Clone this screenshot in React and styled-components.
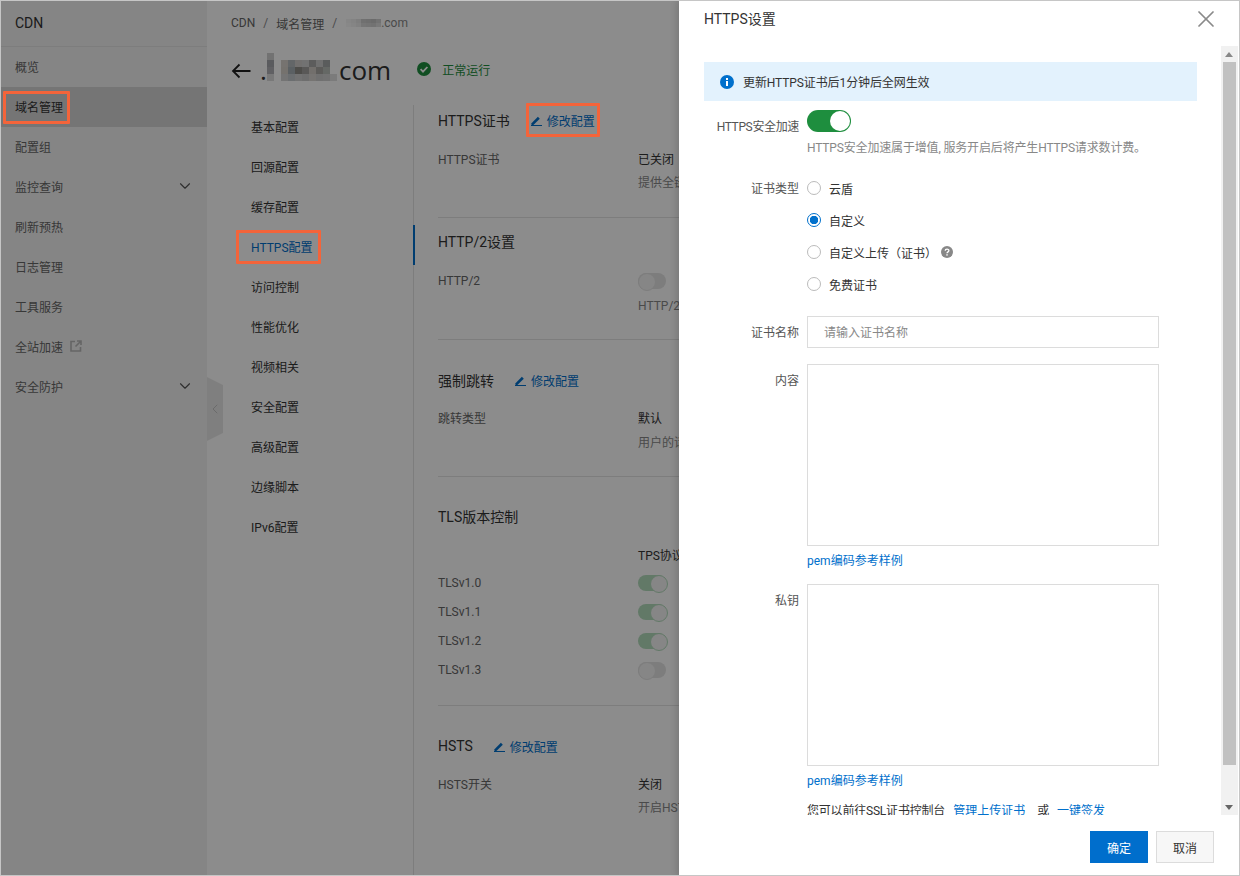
import styled, { createGlobalStyle } from "styled-components";
import { ChevronDown, ChevronLeft, X } from "lucide-react";

const BLUE = "#0070cc";
const FONT = `Roboto, "Noto Sans CJK SC", sans-serif`;

const SIDE_ITEMS = [
  { label: "概览" },
  { label: "域名管理", active: true },
  { label: "配置组" },
  { label: "监控查询", arrow: true },
  { label: "刷新预热" },
  { label: "日志管理" },
  { label: "工具服务" },
  { label: "全站加速", external: true },
  { label: "安全防护", arrow: true },
];

const SUB_ITEMS = ["基本配置", "回源配置", "缓存配置", "HTTPS配置", "访问控制", "性能优化", "视频相关", "安全配置", "高级配置", "边缘脚本", "IPv6配置"];

const TLS = [
  { name: "TLSv1.0", on: true },
  { name: "TLSv1.1", on: true },
  { name: "TLSv1.2", on: true },
  { name: "TLSv1.3", on: false },
];

// blurred domain, one array per row of the mosaic
const TITLE_BLUR = [
  ["#cfcfcf", "", "", "", "", "", "", "", "", ""],
  ["#a4a6ab", "", "#d8d2cc", "#b5babd", "#d0cdca", "#cfcfcf", "#a8a8a8", "#cdcdcd", "#a5a8a8", ""],
  ["#b0b0b5", "", "#d6d0c8", "#a6afb5", "#8f8c88", "#a3a19e", "#d0cbc5", "#a8a6a2", "#b9bdb9", ""],
  ["#dcdcdc", "", "#d4d4d4", "#c4c8cc", "#d0d0d0", "#c8c8c8", "#d8d4d0", "#cccccc", "#d0d0d0", "#e0e0e0"],
];
const CRUMB_BLUR = [
  ["#f4f4f4", "#eeeeee", "#e6e6e6", "#cccccc", "#c8c8c8", "#c4c4c4", "#d0d0d0"],
  ["#f8f8f8", "#f2f2f2", "#ececec", "#d8d8d8", "#d4d4d4", "#d0d0d0", "#dcdcdc"],
];

const GlobalStyle = createGlobalStyle`
  html, body { margin: 0; padding: 0; background: #fff; }
  * { box-sizing: border-box; }
  body { font-family: ${FONT}; font-size: 12px; color: #333; }
`;

const Frame = styled.div`
  position: relative;
  width: 1240px;
  height: 876px;
  overflow: hidden;
  display: flex;
  background: #fff;
  &::after {
    content: "";
    position: absolute;
    inset: 0;
    border: 1px solid #c6c6c6;
    z-index: 9;
    pointer-events: none;
  }
`;

const Sidebar = styled.aside`
  flex: 0 0 207px;
  background: #f2f2f2;
`;

const SideHead = styled.div`
  height: 47px;
  padding-left: 15px;
  display: flex;
  align-items: center;
  font-size: 14px;
  color: #333;
  border-bottom: 1px solid #e3e3e3;
`;

const SideItem = styled.div`
  height: 40px;
  padding: 0 15px 2px;
  display: flex;
  align-items: center;
  color: ${(p) => (p.$active ? "#333" : "#666")};
  background: ${(p) => (p.$active ? "#d6d6d6" : "transparent")};
`;

const SideArrow = styled(ChevronDown)`
  margin-left: auto;
  margin-right: -2px;
  color: #555;
`;

const ExternalIcon = styled.svg`
  margin-left: 7px;
  width: 12px;
  height: 12px;
`;

const Collapse = styled.div`
  position: absolute;
  left: 207px;
  top: 377px;
  width: 16px;
  height: 64px;
  background: #e8e8e8;
  clip-path: polygon(0 0, 100% 8px, 100% 56px, 0 100%);
  display: flex;
  align-items: center;
  justify-content: center;
  color: #c4c4c4;
`;

const Main = styled.main`
  flex: 1;
  min-width: 0;
  padding-left: 24px;
  display: flex;
  flex-direction: column;
`;

const Crumbs = styled.div`
  height: 46px;
  display: flex;
  align-items: center;
  gap: 8px;
  color: #666;
`;

const CrumbSep = styled.span`
  color: #888;
`;

const Mosaic = styled.span`
  display: inline-flex;
  flex-direction: column;
  flex: none;
`;

const MosaicRow = styled.span`
  display: flex;
`;

const MosaicCell = styled.span`
  width: ${(p) => p.$w}px;
  height: ${(p) => p.$h}px;
  background: ${(p) => p.$c || "transparent"};
`;

const CrumbDomain = styled.span`
  display: flex;
  align-items: center;
  margin-left: 1px;
  font-size: 12px;
  color: #888;
`;

const TitleRow = styled.div`
  height: 59px;
  display: flex;
  align-items: center;
  padding-bottom: 9px;
`;

const TitleDomain = styled.span`
  display: flex;
  align-items: center;
  gap: 2px;
  margin-left: 9px;
  margin-bottom: 2px;
  font: 26px/36px "Open Sans", sans-serif;
  color: #333;
`;

const TitleDot = styled.span`
  width: 5px;
`;

const TitleBlur = styled.span`
  display: flex;
  margin-bottom: 7px;
`;

const Status = styled.span`
  display: flex;
  align-items: center;
  gap: 11px;
  margin-left: 26px;
  margin-bottom: 4px;
  color: #1e8e3e;
`;

const Body = styled.div`
  flex: 1;
  min-height: 0;
  display: flex;
`;

const SubNav = styled.nav`
  flex: 0 0 183px;
  padding-top: 2px;
  border-right: 1px solid #e3e3e3;
`;

const SubItem = styled.div`
  position: relative;
  height: 40px;
  padding: 0 0 2px 20px;
  display: flex;
  align-items: center;
  color: ${(p) => (p.$active ? BLUE : "#333")};
  ${(p) =>
    p.$active &&
    `&::after {
      content: "";
      position: absolute;
      right: -2px;
      top: -2px;
      width: 2px;
      height: 40px;
      background: ${BLUE};
    }`}
`;

const Content = styled.div`
  flex: 1;
  min-width: 0;
  margin-left: 24px;
  white-space: nowrap;
`;

const Section = styled.section`
  padding-top: ${(p) => p.$pt}px;
  padding-bottom: ${(p) => p.$pb}px;
  border-bottom: ${(p) => (p.$last ? "none" : "1px solid #e3e3e3")};
`;

const SectionHead = styled.div`
  height: 20px;
  margin-bottom: ${(p) => p.$gap}px;
  display: flex;
  align-items: center;
  gap: 21px;
  font-size: 14px;
  color: #333;
`;

const EditLink = styled.a`
  display: inline-flex;
  align-items: center;
  gap: 4px;
  font-size: 12px;
  color: ${BLUE};
`;

const Row = styled.div`
  display: grid;
  grid-template-columns: 200px 1fr;
  align-items: center;
  height: ${(p) => p.$h || 20}px;
  margin-bottom: ${(p) => p.$mb || 0}px;
  color: #666;
`;

const Value = styled.span`
  color: #333;
`;

const Desc = styled.div`
  height: 20px;
  margin-top: ${(p) => p.$mt || 5}px;
  padding-left: 200px;
  line-height: 20px;
  color: #888;
`;

const Toggle = styled.span`
  position: relative;
  display: block;
  width: 28px;
  height: 16px;
  border-radius: 8px;
  background: ${(p) => (p.$on ? "#b3dcbc" : "#e3e3e3")};
  &::after {
    content: "";
    position: absolute;
    top: 0;
    left: ${(p) => (p.$on ? "12px" : "0")};
    width: 16px;
    height: 16px;
    border-radius: 50%;
    background: #f4f4f4;
    border: 1px solid ${(p) => (p.$on ? "#b3dcbc" : "#e3e3e3")};
  }
`;

const Overlay = styled.div`
  position: absolute;
  inset: 0;
  background: rgba(0, 0, 0, 0.45);
`;

const Drawer = styled.div`
  position: absolute;
  top: 0;
  right: 0;
  bottom: 0;
  width: 561px;
  background: #fff;
  display: flex;
  flex-direction: column;
  box-shadow: -3px 0 6px rgba(0, 0, 0, 0.12);
`;

const DrawerHead = styled.div`
  flex: 0 0 46px;
  padding: 0 20px 8px 25px;
  display: flex;
  align-items: center;
  justify-content: space-between;
  font-size: 14px;
  color: #333;
`;

const DrawerTitle = styled.span`
  margin-bottom: 2px;
`;

const CloseIcon = styled(X)`
  color: #8a8a8a;
`;

const DrawerBody = styled.div`
  flex: 1;
  min-height: 0;
  display: flex;
  padding-right: 2px;
`;

const DrawerScroll = styled.div`
  flex: 1;
  min-width: 0;
  padding: 16px 24px 0 25px;
  overflow: hidden;
`;

const ScrollTrack = styled.div`
  flex: 0 0 17px;
  padding-right: 1px;
  display: flex;
  flex-direction: column;
  background: #f1f1f1;
`;

const ScrollArrow = styled.div`
  flex: 0 0 16px;
  display: flex;
  align-items: center;
  justify-content: center;
  &::before {
    content: "";
    border-left: 4px solid transparent;
    border-right: 4px solid transparent;
    ${(p) => (p.$down ? "border-top: 5px solid #666;" : "border-bottom: 5px solid #888;")}
  }
`;

const ScrollThumb = styled.div`
  height: 703px;
  margin: 0 1px 0 2px;
  background: #c1c1c1;
`;

const ScrollRest = styled.div`
  flex: 1;
`;

const Alert = styled.div`
  height: 39px;
  padding-left: 16px;
  margin-bottom: 9px;
  display: flex;
  align-items: center;
  gap: 9px;
  background: #e3f2fd;
  color: #333;
  letter-spacing: -0.1px;
`;

const FormRow = styled.div`
  display: grid;
  grid-template-columns: 95px 1fr;
  column-gap: 8px;
  margin-bottom: ${(p) => p.$mb ?? 16}px;
`;

const FormLabel = styled.label`
  height: 32px;
  padding-top: 1px;
  line-height: 32px;
  text-align: right;
  color: #555;
  white-space: nowrap;
  letter-spacing: ${(p) => (p.$tight ? "-0.35px" : "0")};
`;

const Switch = styled.span`
  position: relative;
  display: block;
  width: 44px;
  height: 22px;
  border-radius: 11px;
  background: #1e8e3e;
  &::after {
    content: "";
    position: absolute;
    top: 1px;
    right: 1px;
    width: 20px;
    height: 20px;
    border-radius: 50%;
    background: #fff;
  }
`;

const Help = styled.div`
  margin-top: 6px;
  line-height: 20px;
  color: #888;
  white-space: nowrap;
  letter-spacing: -0.16px;
`;

const RadioLine = styled.label`
  height: 32px;
  display: flex;
  align-items: center;
  color: #333;
`;

const Radio = styled.input.attrs({ type: "radio", name: "certType" })`
  appearance: none;
  width: 14px;
  height: 14px;
  margin: 0 8px 0 0;
  border-radius: 50%;
  border: 1px solid #bbb;
  background: #fff;
  &:checked {
    border-color: ${BLUE};
    background: radial-gradient(circle, ${BLUE} 0 4px, #fff 4.5px);
  }
`;

const HelpDot = styled.svg`
  width: 12px;
  height: 12px;
  margin-left: 4px;
`;

const TextInput = styled.input`
  display: block;
  width: 352px;
  height: 32px;
  padding: 2px 16px 0;
  border: 1px solid #dcdcdc;
  outline: none;
  font: 12px ${FONT};
  color: #333;
  &::placeholder { color: #888; opacity: 1; }
`;

const TextArea = styled.textarea`
  display: block;
  width: 352px;
  height: 182px;
  padding: 8px;
  border: 1px solid #dcdcdc;
  outline: none;
  resize: none;
  font: 12px ${FONT};
`;

const SampleLink = styled.a`
  display: block;
  margin: 6px 0 -1px;
  padding-top: 1px;
  line-height: 16px;
  color: ${BLUE};
`;

const Note = styled.div`
  margin: 5px 0 0 103px;
  line-height: 14px;
  color: #333;
  white-space: nowrap;
  letter-spacing: -0.2px;
`;

const NoteLink = styled.a`
  color: ${BLUE};
  margin: 0 ${(p) => p.$r}px 0 ${(p) => p.$l}px;
  letter-spacing: 0;
`;

const DrawerFoot = styled.div`
  flex: 0 0 61px;
  padding: 16px 26px 0 0;
  display: flex;
  justify-content: flex-end;
  gap: 8px;
`;

const Button = styled.button`
  width: 58px;
  height: 32px;
  padding: 0;
  border: 1px solid ${(p) => (p.$primary ? "#006ecc" : "#dcdcdc")};
  background: ${(p) => (p.$primary ? "#006ecc" : "#f7f7f7")};
  color: ${(p) => (p.$primary ? "#fff" : "#333")};
  font: 12px ${FONT};
`;

const Mark = styled.div`
  position: absolute;
  left: ${(p) => p.$x}px;
  top: ${(p) => p.$y}px;
  width: ${(p) => p.$w}px;
  height: ${(p) => p.$h}px;
  border: 3px solid #f4643a;
  border-radius: 1px;
  z-index: 5;
`;

function Blur({ rows, w, h }) {
  return (
    <Mosaic>
      {rows.map((row, i) => (
        <MosaicRow key={i}>
          {row.map((c, j) => (
            <MosaicCell key={j} $w={w} $h={h} $c={c} />
          ))}
        </MosaicRow>
      ))}
    </Mosaic>
  );
}

function Pencil() {
  return (
    <svg width="12" height="11" viewBox="0 0 12 11">
      <path d="M0.5 8.2 L6.9 1.8 L8.8 3.7 L2.4 9.9 L0.5 9.9 Z" fill={BLUE} />
      <rect x="0" y="10" width="11" height="1" fill={BLUE} />
    </svg>
  );
}

function Edit() {
  return (
    <EditLink>
      <Pencil />
      修改配置
    </EditLink>
  );
}

export default function App() {
  return (
    <Frame>
      <GlobalStyle />
      <Sidebar>
        <SideHead>CDN</SideHead>
        {SIDE_ITEMS.map((item) => (
          <SideItem key={item.label} $active={item.active}>
            {item.label}
            {item.arrow && <SideArrow size={18} strokeWidth={1.5} />}
            {item.external && (
              <ExternalIcon viewBox="0 0 12 12">
                <path d="M5 1.5 H1 V11 H10.5 V7 M7 1 H11 V5 M11 1 L5.5 6.5" fill="none" stroke="#b8b8b8" strokeWidth="1.6" />
              </ExternalIcon>
            )}
          </SideItem>
        ))}
      </Sidebar>
      <Collapse>
        <ChevronLeft size={18} strokeWidth={1.5} />
      </Collapse>

      <Main>
        <Crumbs>
          <span>CDN</span>
          <CrumbSep>/</CrumbSep>
          <span>域名管理</span>
          <CrumbSep>/</CrumbSep>
          <CrumbDomain>
            <Blur rows={CRUMB_BLUR} w={5} h={4} />
            .com
          </CrumbDomain>
        </Crumbs>
        <TitleRow>
          <svg width="20" height="16" viewBox="0 0 20 16">
            <path d="M19.5 8 H2 M8.5 1.5 L2 8 L8.5 14.5" fill="none" stroke="#222" strokeWidth="1.8" />
          </svg>
          <TitleDomain>
            <TitleDot>.</TitleDot>
            <TitleBlur>
              <Blur rows={TITLE_BLUR} w={7} h={7} />
            </TitleBlur>
            com
          </TitleDomain>
          <Status>
            <svg width="14" height="14" viewBox="0 0 14 14">
              <circle cx="7" cy="7" r="7" fill="#1e8e3e" />
              <path d="M3.6 7.2 L6 9.6 L10.4 5" fill="none" stroke="#fff" strokeWidth="1.8" />
            </svg>
            正常运行
          </Status>
        </TitleRow>
        <Body>
          <SubNav>
            {SUB_ITEMS.map((label) => (
              <SubItem key={label} $active={label === "HTTPS配置"}>
                {label}
              </SubItem>
            ))}
          </SubNav>
          <Content>
            <Section $pt={5} $pb={24}>
              <SectionHead $gap={18}>
                HTTPS证书
                <Edit />
              </SectionHead>
              <Row>
                HTTPS证书
                <Value>已关闭</Value>
              </Row>
              <Desc>提供全链路HTTPS安全加速方案</Desc>
            </Section>
            <Section $pt={13} $pb={23}>
              <SectionHead $gap={20}>HTTP/2设置</SectionHead>
              <Row>
                HTTP/2
                <Toggle />
              </Row>
              <Desc>HTTP/2是最新的HTTP协议</Desc>
            </Section>
            <Section $pt={30} $pb={23}>
              <SectionHead $gap={17}>
                强制跳转
                <Edit />
              </SectionHead>
              <Row>
                跳转类型
                <Value>默认</Value>
              </Row>
              <Desc $mt={6}>用户的请求将强制跳转</Desc>
            </Section>
            <Section $pt={29} $pb={21}>
              <SectionHead $gap={18}>TLS版本控制</SectionHead>
              <Row $mb={4}>
                <span />
                <Value>TPS协议</Value>
              </Row>
              {TLS.map((t) => (
                <Row key={t.name} $h={29}>
                  {t.name}
                  <Toggle $on={t.on} />
                </Row>
              ))}
            </Section>
            <Section $pt={30} $pb={0} $last>
              <SectionHead $gap={17}>
                HSTS
                <Edit />
              </SectionHead>
              <Row>
                HSTS开关
                <Value>关闭</Value>
              </Row>
              <Desc>开启HSTS后强制使用HTTPS</Desc>
            </Section>
          </Content>
        </Body>
      </Main>

      <Overlay />

      <Drawer>
        <DrawerHead>
          <DrawerTitle>HTTPS设置</DrawerTitle>
          <CloseIcon size={28} strokeWidth={1.5} />
        </DrawerHead>
        <DrawerBody>
          <DrawerScroll>
            <Alert>
              <svg width="14" height="14" viewBox="0 0 14 14">
                <circle cx="7" cy="7" r="7" fill={BLUE} />
                <rect x="6" y="6" width="2" height="5" fill="#fff" />
                <rect x="6" y="3" width="2" height="2" fill="#fff" />
              </svg>
              更新HTTPS证书后1分钟后全网生效
            </Alert>
            <FormRow $mb={14}>
              <FormLabel $tight>HTTPS安全加速</FormLabel>
              <div>
                <Switch />
                <Help>HTTPS安全加速属于增值, 服务开启后将产生HTTPS请求数计费。</Help>
              </div>
            </FormRow>
            <FormRow>
              <FormLabel>证书类型</FormLabel>
              <div>
                <RadioLine>
                  <Radio />
                  云盾
                </RadioLine>
                <RadioLine>
                  <Radio defaultChecked />
                  自定义
                </RadioLine>
                <RadioLine>
                  <Radio />
                  自定义上传（证书）
                  <HelpDot viewBox="0 0 12 12">
                    <circle cx="6" cy="6" r="6" fill="#888" />
                    <path d="M4.2 4.7 C4.2 2.6 7.9 2.6 7.9 4.6 C7.9 5.9 6 5.8 6 7.3" fill="none" stroke="#fff" strokeWidth="1.3" />
                    <rect x="5.3" y="8.2" width="1.4" height="1.4" fill="#fff" />
                  </HelpDot>
                </RadioLine>
                <RadioLine>
                  <Radio />
                  免费证书
                </RadioLine>
              </div>
            </FormRow>
            <FormRow>
              <FormLabel>证书名称</FormLabel>
              <TextInput placeholder="请输入证书名称" />
            </FormRow>
            <FormRow>
              <FormLabel>内容</FormLabel>
              <div>
                <TextArea />
                <SampleLink>pem编码参考样例</SampleLink>
              </div>
            </FormRow>
            <FormRow>
              <FormLabel>私钥</FormLabel>
              <div>
                <TextArea />
                <SampleLink>pem编码参考样例</SampleLink>
              </div>
            </FormRow>
            <Note>
              您可以前往SSL证书控制台
              <NoteLink $l={8} $r={12}>管理上传证书</NoteLink>
              或
              <NoteLink $l={8} $r={0}>一键签发</NoteLink>
            </Note>
          </DrawerScroll>
          <ScrollTrack>
            <ScrollArrow />
            <ScrollThumb />
            <ScrollRest />
            <ScrollArrow $down />
          </ScrollTrack>
        </DrawerBody>
        <DrawerFoot>
          <Button $primary>确定</Button>
          <Button>取消</Button>
        </DrawerFoot>
      </Drawer>

      <Mark $x={3} $y={91} $w={67} $h={33} />
      <Mark $x={236} $y={230} $w={85} $h={34} />
      <Mark $x={526} $y={103} $w={74} $h={34} />
    </Frame>
  );
}
